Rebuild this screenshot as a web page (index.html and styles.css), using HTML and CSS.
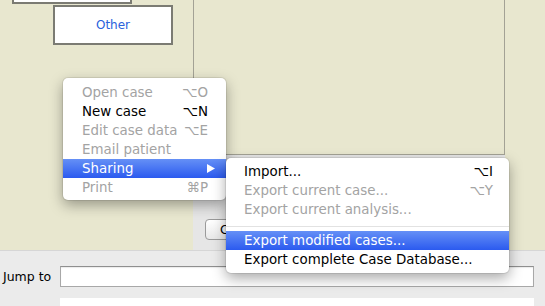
FILE: index.html
```html
<!DOCTYPE html>
<html lang="en">
  <head>
    <meta charset="UTF-8" />
    <meta name="viewport" content="width=device-width, initial-scale=1.0" />
    <title>Case browser</title>
    <link rel="stylesheet" href="styles.css">
  </head>
  <body>
    <div class="window">
      <div class="workspace">
        <div class="canvas">
          <div class="node node-top"></div>
          <div class="node node-other">Other</div>
        </div>
        <div class="center">
          <div class="analysis"></div>
          <div class="button-bar">
            <button class="push">Close</button>
          </div>
        </div>
        <div class="side"></div>
      </div>
      <div class="footer">
        <div class="jump-row">
          <label for="jump">Jump to</label>
          <input type="text" id="jump" />
        </div>
        <div class="results"></div>
      </div>

      <ul class="menu context-menu">
        <li class="item disabled"><span>Open case</span><span>&#8997;O</span></li>
        <li class="item"><span>New case</span><span>&#8997;N</span></li>
        <li class="item disabled"><span>Edit case data</span><span>&#8997;E</span></li>
        <li class="item disabled"><span>Email patient</span></li>
        <li class="item active has-sub">
          <span>Sharing</span>
          <svg class="arrow" width="8" height="9" viewBox="0 0 8 9"><path d="M0 0L8 4.5L0 9z" fill="#fff"/></svg>
        </li>
        <li class="item disabled"><span>Print</span><span>&#8984;P</span></li>
      </ul>

      <ul class="menu submenu">
        <li class="item"><span>Import...</span><span>&#8997;I</span></li>
        <li class="item disabled"><span>Export current case...</span><span>&#8997;Y</span></li>
        <li class="item disabled"><span>Export current analysis...</span></li>
        <li class="separator"></li>
        <li class="item active"><span>Export modified cases...</span></li>
        <li class="item"><span>Export complete Case Database...</span></li>
      </ul>
    </div>
  </body>
</html>
```

FILE: styles.css
```css
body {
  margin: 0;
  overflow: hidden;
}
.window {
  position: relative;
  width: 545px;
  height: 306px;
  overflow: hidden;
  font-family: "DejaVu Sans", sans-serif;
  background: #ebebeb;
}
.workspace {
  display: flex;
  height: 250px;
}
.canvas {
  position: relative;
  width: 193px;
  background: #e8e7cf;
}
.node {
  position: absolute;
  width: 120px;
  height: 40px;
  box-sizing: border-box;
  background: #fff;
  border: 2px solid #7b7b73;
  display: flex;
  align-items: center;
  justify-content: center;
  color: #2a62dc;
  font-size: 12px;
}
.node-top {
  left: 12px;
  top: -36px;
}
.node-other {
  left: 53px;
  top: 5px;
}
.center {
  width: 312px;
  display: flex;
  flex-direction: column;
}
.analysis {
  height: 155px;
  box-sizing: border-box;
  background: #e8e7cf;
  border: 1px solid #a3a295;
  border-top: 0;
}
.button-bar {
  flex: 1;
  display: flex;
  align-items: flex-end;
  padding: 0 0 10px 12px;
  background: #e6e6e6;
}
.push {
  height: 21px;
  padding: 0 14px;
  border: 1px solid #9a9a9a;
  border-radius: 4px;
  background: linear-gradient(#fff, #e8e8e8);
  font: 12.5px "DejaVu Sans", sans-serif;
  color: #000;
}
.side {
  flex: 1;
  background: #e8e7cf;
}
.footer {
  height: 56px;
  box-sizing: border-box;
  border-top: 1px solid #d6d6d6;
  padding: 15px 11px 0 3px;
}
.jump-row {
  display: flex;
  align-items: center;
}
.jump-row label {
  width: 57px;
  font-size: 12.5px;
  color: #000;
}
.jump-row input {
  width: 474px;
  height: 21px;
  box-sizing: border-box;
  margin: 0;
  border: 1px solid #a8a8a8;
  border-top-color: #8f8f8f;
  background: #fff;
  box-shadow: inset 0 1px 1px rgba(0, 0, 0, 0.08);
}
.results {
  margin: 11px 0 0 57px;
  width: 474px;
  height: 20px;
  background: #fff;
}
.menu {
  position: absolute;
  margin: 0;
  list-style: none;
  background: #fff;
  border-radius: 5px;
  box-shadow: 0 5px 14px rgba(0, 0, 0, 0.35), 0 0 0 1px rgba(0, 0, 0, 0.08);
  font-size: 13.4px;
  line-height: 19px;
}
.context-menu {
  left: 63px;
  top: 78px;
  width: 163px;
  padding: 5px 0 3px;
}
.submenu {
  left: 226px;
  top: 158px;
  width: 283px;
  padding: 4px 0;
}
.item {
  display: flex;
  justify-content: space-between;
  align-items: center;
  height: 19px;
  padding: 0 18px 0 19px;
  color: #000;
  white-space: nowrap;
}
.submenu .item {
  padding: 0 16px 0 18px;
}
.item.disabled {
  color: #a3a3a3;
}
.item.active {
  background: linear-gradient(#6590f6, #2b5aef);
  color: #fff;
}
.item.has-sub {
  padding-right: 11px;
}
.separator {
  height: 1px;
  margin: 7px 0 4px;
  background: #e2e2e2;
}
```
